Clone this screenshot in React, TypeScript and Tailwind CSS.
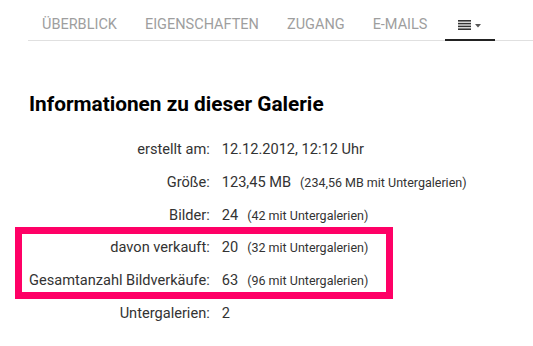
import { Fragment } from 'react';

type Row = { label: string; value: string; extra?: string };

const rows: Row[] = [
  { label: 'erstellt am:', value: '12.12.2012, 12:12 Uhr' },
  { label: 'Größe:', value: '123,45 MB', extra: '(234,56 MB mit Untergalerien)' },
  { label: 'Bilder:', value: '24', extra: '(42 mit Untergalerien)' },
  { label: 'davon verkauft:', value: '20', extra: '(32 mit Untergalerien)' },
  { label: 'Gesamtanzahl Bildverkäufe:', value: '63', extra: '(96 mit Untergalerien)' },
  { label: 'Untergalerien:', value: '2' },
];

const tabs = ['ÜBERBLICK', 'EIGENSCHAFTEN', 'ZUGANG', 'E-MAILS'];

function MenuIcon() {
  return (
    <svg width="24" height="10" viewBox="0 0 24 10" aria-hidden>
      <rect x="0" y="0" width="13" height="1.6" fill="#333" />
      <rect x="0" y="2.8" width="13" height="1.6" fill="#333" />
      <rect x="0" y="5.6" width="13" height="1.6" fill="#333" />
      <rect x="0" y="8.4" width="13" height="1.6" fill="#333" />
      <path d="M17 4 L23 4 L20 7.5 Z" fill="#555" />
    </svg>
  );
}

export default function App() {
  return (
    <div className="w-[533px] h-[346px] bg-white overflow-hidden relative" style={{ fontFamily: 'Roboto, sans-serif' }}>
      {/* Tabs */}
      <nav className="ml-[28px] mt-[6px] flex border-b border-[#e0e0e0] h-[35px]">
        {tabs.map(t => (
          <div key={t} className="px-[14px] pt-[4px] flex items-center text-[14.5px] text-[#9e9e9e] h-full">{t}</div>
        ))}
        <div className="ml-[4px] w-[50px] pt-[4px] flex items-center justify-center border-b-2 border-[#222] h-[35px]">
          <MenuIcon />
        </div>
      </nav>

      <h2 className="ml-[29px] mt-[51px] text-[20.8px] font-bold text-black leading-[24px]">Informationen zu dieser Galerie</h2>

      <div className="ml-[29px] mt-[17px] grid grid-cols-[auto_auto] justify-start gap-x-[12px] text-[#333]">
        {rows.map(r => (
          <Fragment key={r.label}>
            <div className="h-[32.8px] flex items-center justify-end text-[14.6px] leading-none">{r.label}</div>
            <div className="h-[32.8px] flex items-baseline pt-[9px] text-[14.6px] leading-none">
              <span>{r.value}</span>
              {r.extra && <span className="ml-[9px] text-[12.5px]">{r.extra}</span>}
            </div>
          </Fragment>
        ))}
      </div>

      {/* highlight annotation */}
      <div className="absolute left-[15px] top-[227px] w-[378px] h-[72px] border-[7px] border-[#ff0066] pointer-events-none" />
    </div>
  );
}
